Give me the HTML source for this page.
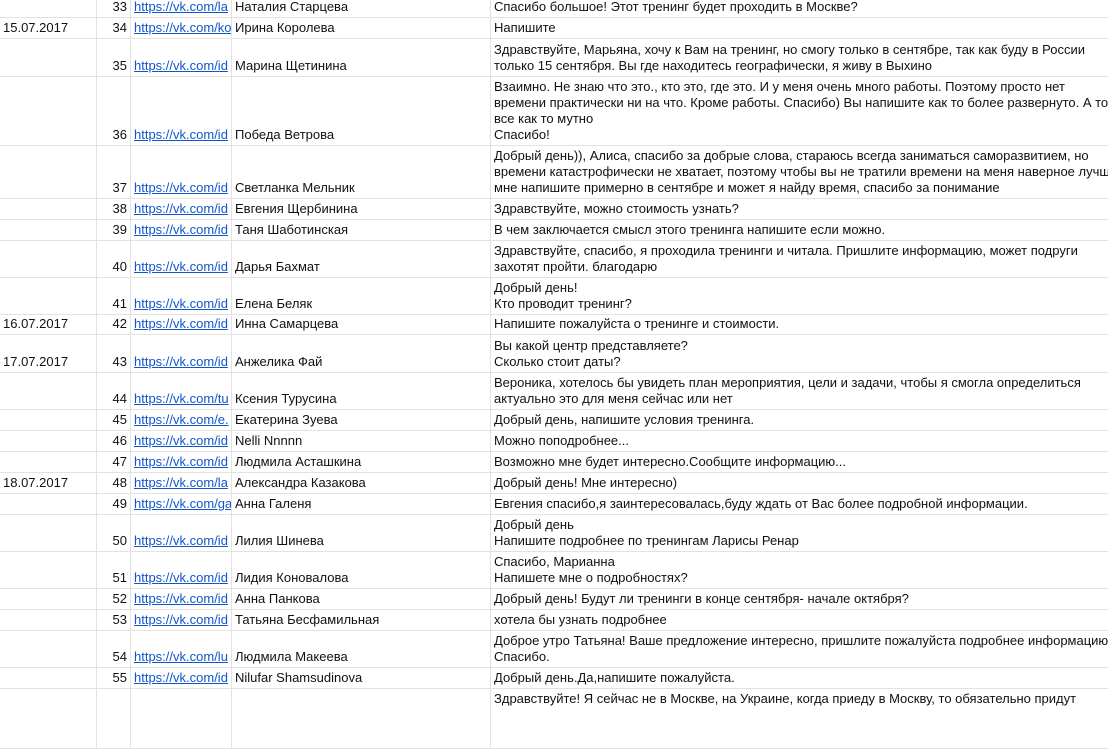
<!DOCTYPE html>
<html><head><meta charset="utf-8"><style>
body{margin:0;width:1108px;height:707px;overflow:hidden;background:#fff;font-family:"Liberation Sans",Arial,sans-serif;font-size:13px;color:#111;position:relative}
.r{position:absolute;left:0;width:1108px;border-bottom:1px solid #e2e2e2;box-sizing:border-box}
.c{position:absolute;top:0;bottom:0;box-sizing:border-box;border-right:1px solid #e2e2e2;overflow:hidden;white-space:nowrap;display:flex;flex-direction:column;justify-content:flex-end;padding:0 3px 2px;line-height:16px}
.d{left:0;width:97px}
.n{left:97px;width:34px;text-align:right;align-items:flex-end}
.l{left:131px;width:101px}
.l span{color:#1155cc;text-decoration:underline}
.p{left:232px;width:259px}
.m{left:491px;width:700px;border-right:none}
.top .c{justify-content:flex-start;padding-top:2px}
</style></head><body>
<div class="r" style="top:-4px;height:22px"><div class="c d"></div><div class="c n">33</div><div class="c l"><span>https://vk.com/la</span></div><div class="c p">Наталия Старцева</div><div class="c m">Спасибо большое! Этот тренинг будет проходить в Москве?</div></div>
<div class="r" style="top:18px;height:21px"><div class="c d">15.07.2017</div><div class="c n">34</div><div class="c l"><span>https://vk.com/ko</span></div><div class="c p">Ирина Королева</div><div class="c m">Напишите</div></div>
<div class="r" style="top:39px;height:38px"><div class="c d"></div><div class="c n">35</div><div class="c l"><span>https://vk.com/id</span></div><div class="c p">Марина Щетинина</div><div class="c m"><div>Здравствуйте, Марьяна, хочу к Вам на тренинг, но смогу только в сентябре, так как буду в России</div><div>только 15 сентября. Вы где находитесь географически, я живу в Выхино</div></div></div>
<div class="r" style="top:77px;height:69px"><div class="c d"></div><div class="c n">36</div><div class="c l"><span>https://vk.com/id</span></div><div class="c p">Победа Ветрова</div><div class="c m"><div>Взаимно. Не знаю что это., кто это, где это. И у меня очень много работы. Поэтому просто нет</div><div>времени практически ни на что. Кроме работы. Спасибо) Вы напишите как то более развернуто. А то</div><div>все как то мутно</div><div>Спасибо!</div></div></div>
<div class="r" style="top:146px;height:53px"><div class="c d"></div><div class="c n">37</div><div class="c l"><span>https://vk.com/id</span></div><div class="c p">Светланка Мельник</div><div class="c m"><div>Добрый день)), Алиса, спасибо за добрые слова, стараюсь всегда заниматься саморазвитием, но</div><div>времени катастрофически не хватает, поэтому чтобы вы не тратили времени на меня наверное лучше</div><div>мне напишите примерно в сентябре и может я найду время, спасибо за понимание</div></div></div>
<div class="r" style="top:199px;height:21px"><div class="c d"></div><div class="c n">38</div><div class="c l"><span>https://vk.com/id</span></div><div class="c p">Евгения Щербинина</div><div class="c m">Здравствуйте, можно стоимость узнать?</div></div>
<div class="r" style="top:220px;height:21px"><div class="c d"></div><div class="c n">39</div><div class="c l"><span>https://vk.com/id</span></div><div class="c p">Таня Шаботинская</div><div class="c m">В чем заключается смысл этого тренинга напишите если можно.</div></div>
<div class="r" style="top:241px;height:37px"><div class="c d"></div><div class="c n">40</div><div class="c l"><span>https://vk.com/id</span></div><div class="c p">Дарья Бахмат</div><div class="c m"><div>Здравствуйте, спасибо, я проходила тренинги и читала. Пришлите информацию, может подруги</div><div>захотят пройти. благодарю</div></div></div>
<div class="r" style="top:278px;height:37px"><div class="c d"></div><div class="c n">41</div><div class="c l"><span>https://vk.com/id</span></div><div class="c p">Елена Беляк</div><div class="c m"><div>Добрый день!</div><div>Кто проводит тренинг?</div></div></div>
<div class="r" style="top:315px;height:20px"><div class="c d">16.07.2017</div><div class="c n">42</div><div class="c l"><span>https://vk.com/id</span></div><div class="c p">Инна Самарцева</div><div class="c m">Напишите пожалуйста о тренинге и стоимости.</div></div>
<div class="r" style="top:335px;height:38px"><div class="c d">17.07.2017</div><div class="c n">43</div><div class="c l"><span>https://vk.com/id</span></div><div class="c p">Анжелика Фай</div><div class="c m"><div>Вы какой центр представляете?</div><div>Сколько стоит даты?</div></div></div>
<div class="r" style="top:373px;height:37px"><div class="c d"></div><div class="c n">44</div><div class="c l"><span>https://vk.com/tu</span></div><div class="c p">Ксения Турусина</div><div class="c m"><div>Вероника, хотелось бы увидеть план мероприятия, цели и задачи, чтобы я смогла определиться</div><div>актуально это для меня сейчас или нет</div></div></div>
<div class="r" style="top:410px;height:21px"><div class="c d"></div><div class="c n">45</div><div class="c l"><span>https://vk.com/e.</span></div><div class="c p">Екатерина Зуева</div><div class="c m">Добрый день, напишите условия тренинга.</div></div>
<div class="r" style="top:431px;height:21px"><div class="c d"></div><div class="c n">46</div><div class="c l"><span>https://vk.com/id</span></div><div class="c p">Nelli Nnnnn</div><div class="c m">Можно поподробнее...</div></div>
<div class="r" style="top:452px;height:21px"><div class="c d"></div><div class="c n">47</div><div class="c l"><span>https://vk.com/id</span></div><div class="c p">Людмила Асташкина</div><div class="c m">Возможно мне будет интересно.Сообщите информацию...</div></div>
<div class="r" style="top:473px;height:21px"><div class="c d">18.07.2017</div><div class="c n">48</div><div class="c l"><span>https://vk.com/la</span></div><div class="c p">Александра Казакова</div><div class="c m">Добрый день! Мне интересно)</div></div>
<div class="r" style="top:494px;height:21px"><div class="c d"></div><div class="c n">49</div><div class="c l"><span>https://vk.com/ga</span></div><div class="c p">Анна Галеня</div><div class="c m">Евгения спасибо,я заинтересовалась,буду ждать от Вас более подробной информации.</div></div>
<div class="r" style="top:515px;height:37px"><div class="c d"></div><div class="c n">50</div><div class="c l"><span>https://vk.com/id</span></div><div class="c p">Лилия Шинева</div><div class="c m"><div>Добрый день</div><div>Напишите подробнее по тренингам Ларисы Ренар</div></div></div>
<div class="r" style="top:552px;height:37px"><div class="c d"></div><div class="c n">51</div><div class="c l"><span>https://vk.com/id</span></div><div class="c p">Лидия Коновалова</div><div class="c m"><div>Спасибо, Марианна</div><div>Напишете мне о подробностях?</div></div></div>
<div class="r" style="top:589px;height:21px"><div class="c d"></div><div class="c n">52</div><div class="c l"><span>https://vk.com/id</span></div><div class="c p">Анна Панкова</div><div class="c m">Добрый день! Будут ли тренинги в конце сентября- начале октября?</div></div>
<div class="r" style="top:610px;height:21px"><div class="c d"></div><div class="c n">53</div><div class="c l"><span>https://vk.com/id</span></div><div class="c p">Татьяна Бесфамильная</div><div class="c m">хотела бы узнать подробнее</div></div>
<div class="r" style="top:631px;height:37px"><div class="c d"></div><div class="c n">54</div><div class="c l"><span>https://vk.com/lu</span></div><div class="c p">Людмила Макеева</div><div class="c m"><div>Доброе утро Татьяна! Ваше предложение интересно, пришлите пожалуйста подробнее информацию.</div><div>Спасибо.</div></div></div>
<div class="r" style="top:668px;height:21px"><div class="c d"></div><div class="c n">55</div><div class="c l"><span>https://vk.com/id</span></div><div class="c p">Nilufar Shamsudinova</div><div class="c m">Добрый день.Да,напишите пожалуйста.</div></div>
<div class="r top" style="top:689px;height:60px"><div class="c d"></div><div class="c n"></div><div class="c l"></div><div class="c p"></div><div class="c m">Здравствуйте! Я сейчас не в Москве, на Украине, когда приеду в Москву, то обязательно придут</div></div>
</body></html>
